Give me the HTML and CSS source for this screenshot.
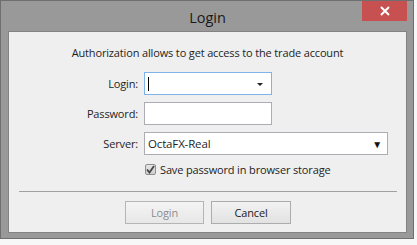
FILE: index.html
```html
<!DOCTYPE html>
<html>
<head>
<meta charset="utf-8">
<link rel="stylesheet" href="styles.css">
</head>
<body>
<div class="window">
  <div class="titlebar">
    <span class="title">Login</span>
    <div class="close"><svg width="12" height="10" viewBox="0 0 12 10"><path d="M2 1 L10 9 M10 1 L2 9" stroke="#fff" stroke-width="2" fill="none"/></svg></div>
  </div>
  <div class="client">
    <p class="desc">Authorization allows to get access to the trade account</p>
    <div class="form">
      <label class="lbl">Login:</label>
      <div class="input login-input"><span class="caret"></span><span class="small-arrow"></span></div>
      <label class="lbl">Password:</label>
      <div class="input"></div>
      <label class="lbl">Server:</label>
      <div class="input server"><span>OctaFX-Real</span><span class="big-arrow">▼</span></div>
      <span></span>
      <div class="check-row"><span class="checkbox"><svg width="9" height="9" viewBox="0 0 9 9"><path d="M1 4.5 L3.5 7.5 L8 1" stroke="#444" stroke-width="1.8" fill="none"/></svg></span><span>Save password in browser storage</span></div>
    </div>
    <div class="sep"></div>
    <div class="buttons">
      <div class="btn disabled">Login</div>
      <div class="btn">Cancel</div>
    </div>
  </div>
</div>
</body>
</html>
```
FILE: styles.css
```css
html, body { margin: 0; padding: 0; background: #f7f7f7; }
body { font-family: "Open Sans", "Noto Sans", sans-serif; font-size: 11px; letter-spacing: -0.15px; color: #1e1e1e; }
.window {
  width: 414px; height: 239px; box-sizing: border-box;
  border: 1px solid #6f6f6f; background: #999999;
  display: flex; flex-direction: column;
  padding: 0 6px 5px 7px;
}
.titlebar { position: relative; height: 30px; display: flex; align-items: center; justify-content: center; }
.title { font-size: 14.5px; letter-spacing: 0; color: #1a1a1a; padding-top: 2px; }
.close {
  position: absolute; right: 0; top: 0; width: 45px; height: 20px;
  background: #c75050; display: flex; align-items: center; justify-content: center;
}
.client {
  flex: 1; background: #efefef; border: 1px solid #838383;
  display: flex; flex-direction: column;
}
.desc { margin: 12px 0 0; text-align: center; height: 17px; line-height: 17px; }
.form {
  margin-top: 11px;
  display: grid; grid-template-columns: 129px 1fr; column-gap: 6px; row-gap: 7px;
  align-items: center;
}
.lbl { text-align: right; }
.input {
  height: 23px; box-sizing: border-box; width: 128px; background: #fff;
  border: 1px solid #abadb3; position: relative; display: flex; align-items: center;
}
.login-input { border-color: #7eb4ea; }
.caret { width: 1px; height: 14px; background: #000; margin-left: 3px; }
.small-arrow {
  position: absolute; right: 8px; top: 10px; width: 0; height: 0;
  border-left: 3px solid transparent; border-right: 3px solid transparent; border-top: 3px solid #222;
}
.server { width: 244px; padding-left: 3px; justify-content: space-between; font-size: 11.5px; }
.big-arrow { font-size: 10px; margin-right: 5px; color: #111; }
.check-row { display: flex; align-items: center; gap: 4px; margin-top: 0px; height: 14px; }
.checkbox {
  width: 11px; height: 11px; box-sizing: border-box; border: 1px solid #8f8f8f; border-radius: 2px;
  background: linear-gradient(#e6e6e6, #cfcfcf); display: flex; align-items: center; justify-content: center; margin-left: 1px;
}
.sep { height: 1px; background: #a0a0a0; margin: 15px 9px 0 10px; }
.buttons { display: flex; justify-content: center; gap: 7px; margin-top: 9px; padding-left: 1px; }
.btn {
  width: 80px; height: 23px; box-sizing: border-box; border: 1px solid #acacac;
  background: linear-gradient(#f2f2f2, #e2e2e2); display: flex; align-items: center; justify-content: center;
  color: #1a1a1a;
}
.btn.disabled { color: #8c8c8c; width: 79px; border-color: #b5b5b5; background: linear-gradient(#f4f4f4, #e7e7e7); }
```
